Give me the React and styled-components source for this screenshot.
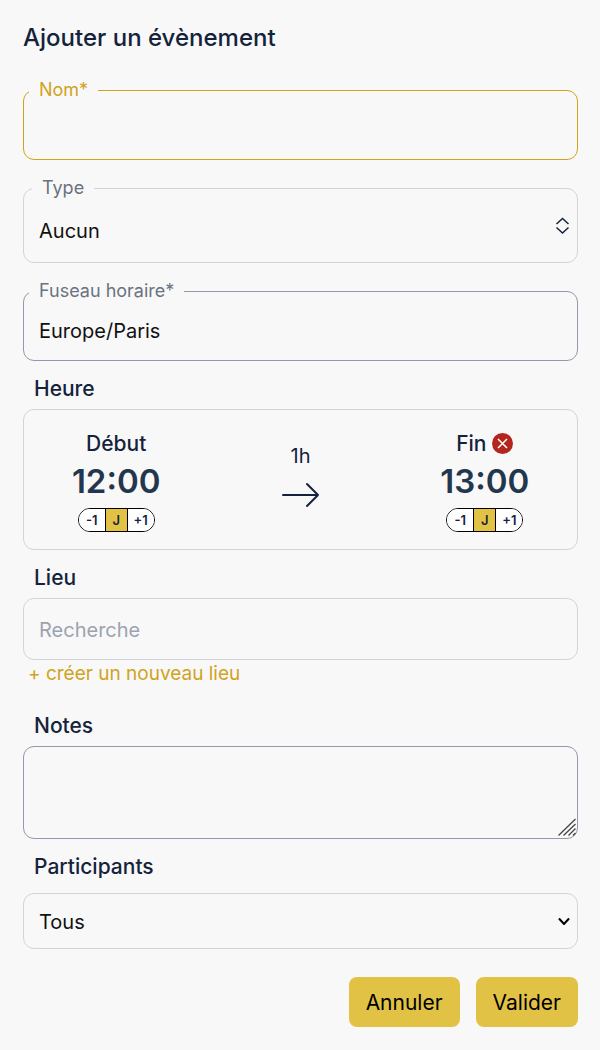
import { useState } from "react"
import styled, { createGlobalStyle } from "styled-components"

export default function App(){

    const [nom, setNom] = useState("")
    const [fuseau, setFuseau] = useState("Europe/Paris")
    const [lieu, setLieu] = useState("")
    const [notes, setNotes] = useState("")
    const [jourDebut, setJourDebut] = useState("J")
    const [jourFin, setJourFin] = useState("J")

    return(
    <>
        <GlobalStyle/>
        <Form onSubmit={e => e.preventDefault()}>
            <Title>Ajouter un évènement</Title>

            <Fields>
                <Field $color="#d0a31c">
                    <Legend><label htmlFor="nom">Nom*</label></Legend>
                    <FieldInput id="nom" type="text" required value={nom} onChange={e => setNom(e.target.value)}/>
                </Field>

                <Field $color="#d1d5db" $text="#6b7280">
                    <Legend $indent><label htmlFor="type">Type</label></Legend>
                    <Stack>
                        <TypeSelect id="type">
                            <option>Aucun</option>
                        </TypeSelect>
                        <TypeIcon width="14" height="18" viewBox="0 0 14 18" aria-hidden="true">
                            <path d="M1.500 7L7.500 1.500L13.500 7M1.500 10.500L7.500 16L13.500 10.500"/>
                        </TypeIcon>
                    </Stack>
                </Field>

                <Field $color="#9399a8" $text="#6b7280">
                    <Legend><label htmlFor="fuseau">Fuseau horaire*</label></Legend>
                    <FieldInput id="fuseau" type="text" required value={fuseau} onChange={e => setFuseau(e.target.value)}/>
                </Field>
            </Fields>

            <SectionTitle>Heure</SectionTitle>
            <Card>
                <Moment>
                    <MomentTitle>Début</MomentTitle>
                    <Hour type="button">12:00</Hour>
                    <DayPicker value={jourDebut} onChange={setJourDebut}/>
                </Moment>
                <Duration>
                    <span>1h</span>
                    <Arrow width="38" height="26" viewBox="0 0 38 26" aria-hidden="true">
                        <path d="M2 13H37M26 2L37 13L26 24"/>
                    </Arrow>
                </Duration>
                <Moment>
                    <MomentTitle>
                        Fin
                        <Remove type="button" aria-label="Supprimer la fin">
                            <svg width="11" height="11" viewBox="0 0 11 11" aria-hidden="true">
                                <path d="M1 1L10 10M10 1L1 10"/>
                            </svg>
                        </Remove>
                    </MomentTitle>
                    <Hour type="button">13:00</Hour>
                    <DayPicker value={jourFin} onChange={setJourFin}/>
                </Moment>
            </Card>

            <SectionTitle as="label" htmlFor="lieu">Lieu</SectionTitle>
            <SearchInput id="lieu" type="text" placeholder="Recherche" value={lieu} onChange={e => setLieu(e.target.value)}/>
            <NewPlace href="#lieu">+ créer un nouveau lieu</NewPlace>

            <SectionTitle as="label" htmlFor="notes">Notes</SectionTitle>
            <Stack>
                <Notes id="notes" value={notes} onChange={e => setNotes(e.target.value)}/>
                <Grip width="20" height="20" viewBox="0 0 20 20" aria-hidden="true">
                    <path d="M1.500 17.500L18.500 1M6.500 17.500L18.500 6M11.500 17.500L18.500 10.500M16 17.500L18.500 15"/>
                </Grip>
            </Stack>

            <SectionTitle as="label" htmlFor="participants">Participants</SectionTitle>
            <SelectBox>
                <PlainSelect id="participants">
                    <option>Tous</option>
                </PlainSelect>
                <Chevron width="12" height="8" viewBox="0 0 12 8" aria-hidden="true">
                    <path d="M1 1.500L6 7L11 1.500"/>
                </Chevron>
            </SelectBox>

            <Actions>
                <Button type="button">Annuler</Button>
                <Button type="submit">Valider</Button>
            </Actions>
        </Form>
    </>
    )
}

function DayPicker({value, onChange}){
    return(
        <Days>
            {["-1", "J", "+1"].map((jour) => (
                <Day key={jour} type="button" aria-pressed={jour === value} $active={jour === value} onClick={() => onChange(jour)}>{jour}</Day>
            ))}
        </Days>
    )
}

const GlobalStyle = createGlobalStyle`
*{
    box-sizing: border-box;
}
body{
    margin: 0;
    background: #f8f8f8;
    color: #14233b;
    font-family: Inter, "Liberation Sans", sans-serif;
    font-size: 20px;
    line-height: 24px;
}
button, input, select, textarea{
    margin: 0;
    font: inherit;
}
button{
    cursor: pointer;
}`;

const Form = styled.form`
display: flex;
flex-direction: column;
padding: 22px 22px 23px 23px;`;

const Title = styled.h1`
margin: 0 0 24px;
font-size: 24px;
line-height: 32px;
font-weight: 500;`;

const Fields = styled.div`
display: flex;
flex-direction: column;
gap: 16px;`;

const Field = styled.fieldset`
min-width: 0;
margin: 0;
padding: 0 5px;
border: 1px solid ${props => props.$color};
border-radius: 11px;
color: ${props => props.$text || props.$color};`;

const Legend = styled.legend`
margin-left: ${props => props.$indent ? "3px" : "0"};
padding: 0 10px;
font-size: 18px;
line-height: 24px;`;

const FieldInput = styled.input`
display: block;
width: 100%;
height: 57px;
padding: 0 10px 1px;
border: none;
outline: none;
background: transparent;
color: #111111;`;

const Stack = styled.div`
display: grid;
> *{
    grid-area: 1 / 1;
}`;

const PlainSelect = styled.select`
width: 100%;
height: 54px;
padding: 2px 15px 0;
border: none;
outline: none;
appearance: none;
background: transparent;
color: #111111;`;

const TypeSelect = styled(PlainSelect)`
height: 62px;
padding: 0 10px 1px;`;

const TypeIcon = styled.svg`
align-self: center;
justify-self: end;
margin: 0 3px 10px 0;
overflow: visible;
fill: none;
stroke: #14233b;
stroke-width: 1.5;
pointer-events: none;`;

const SectionTitle = styled.h2`
margin: 16px 11px 8px;
font-size: 21px;
line-height: 24px;
font-weight: 500;`;

const Card = styled.section`
display: grid;
grid-template-columns: repeat(3, 1fr);
padding: 20px 0 17px;
border: 1px solid #d1d5db;
border-radius: 11px;`;

const Moment = styled.div`
display: flex;
flex-direction: column;
align-items: center;`;

const MomentTitle = styled.div`
display: flex;
align-items: center;
gap: 6px;
font-size: 21px;
line-height: 27px;
font-weight: 500;`;

const Hour = styled.button`
margin-bottom: 3px;
padding: 0;
border: none;
background: transparent;
color: #24364d;
font-size: 33px;
line-height: 48px;
font-weight: 600;`;

const Days = styled.div`
display: flex;
overflow: hidden;
height: 24px;
border: 1px solid #000000;
border-radius: 12px;
background: #ffffff;`;

const Day = styled.button`
width: ${props => props.$active ? "23px" : "26px"};
padding: 0;
border: solid #000000;
border-width: ${props => props.$active ? "0 1px" : "0"};
background: ${props => props.$active ? "#e2c245" : "#ffffff"};
color: #14233b;
font-size: 13px;
line-height: 22px;
font-weight: 600;`;

const Duration = styled.div`
display: flex;
flex-direction: column;
align-items: center;
gap: 14px;
padding-top: 14px;`;

const Arrow = styled.svg`
overflow: visible;
fill: none;
stroke: #14233b;
stroke-width: 2;
stroke-linecap: round;
stroke-linejoin: round;`;

const Remove = styled.button`
display: flex;
align-items: center;
justify-content: center;
width: 21px;
height: 21px;
padding: 0;
border: none;
border-radius: 50%;
background: #b3261e;
svg{
    stroke: #ffffff;
    stroke-width: 1.5;
}`;

const SearchInput = styled.input`
width: 100%;
height: 62px;
padding: 2px 15px 0;
border: 1px solid #d1d5db;
border-radius: 11px;
outline: none;
background: transparent;
color: #111111;
&::placeholder{
    color: #9ca3af;
}`;

const NewPlace = styled.a`
align-self: flex-start;
margin: 0 5px 10px;
font-size: 19px;
line-height: 28px;
color: #d0a31c;
text-decoration: none;`;

const Notes = styled.textarea`
width: 100%;
height: 93px;
padding: 14px;
border: 1px solid #9399a8;
border-radius: 11px;
outline: none;
background: transparent;
resize: none;
color: #111111;`;

const Grip = styled.svg`
align-self: end;
justify-self: end;
margin: 0 1px 1px 0;
fill: none;
stroke: #444444;
stroke-width: 1.25;
pointer-events: none;`;

const SelectBox = styled(Stack)`
margin-top: 6px;
border: 1px solid #d1d5db;
border-radius: 11px;`;

const Chevron = styled.svg`
align-self: center;
justify-self: end;
margin-right: 7px;
fill: none;
stroke: #000000;
stroke-width: 2;
pointer-events: none;`;

const Actions = styled.div`
display: flex;
justify-content: flex-end;
gap: 16px;
margin-top: 28px;`;

const Button = styled.button`
height: 50px;
padding: 2px 17px 0;
border: none;
border-radius: 8px;
background: #e2c245;
color: #000000;
font-size: 21px;`;
